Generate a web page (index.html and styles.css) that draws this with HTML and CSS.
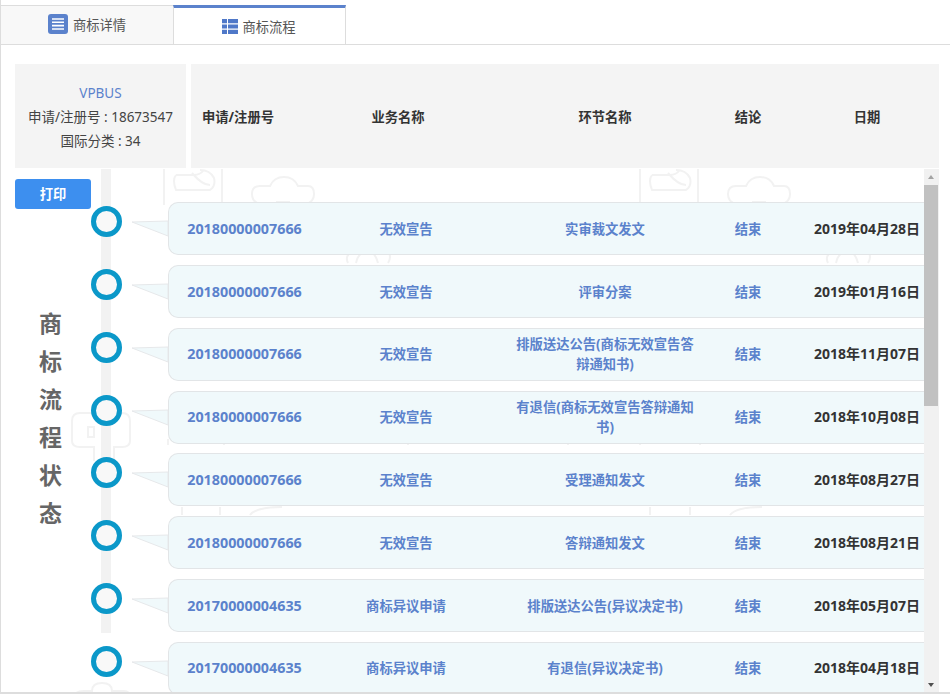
FILE: index.html
```html
<!DOCTYPE html>
<html lang="zh">
<head>
<meta charset="utf-8">
<title>商标流程</title>
<link rel="stylesheet" href="styles.css">
</head>
<body>
<div class="page">
  <nav class="tabs">
    <div class="tab">
      <svg class="icon-detail" viewBox="0 0 20 20"><rect width="20" height="20" rx="3" fill="#5b82cc"/><path d="M4 5h12M4 8.2h12M4 11.6h12M4 15h12" stroke="#fff" stroke-width="1.6" fill="none"/></svg>
      <span>商标详情</span>
    </div>
    <div class="tab tab-active">
      <svg class="icon-flow" viewBox="0 0 16 15"><path fill="#4f78c8" d="M0 0h5v4.2H0zM6 0h10v4.2H6zM0 5.4h5v4.2H0zM6 5.4h10v4.2H6zM0 10.8h5V15H0zM6 10.8h10V15H6z"/></svg>
      <span>商标流程</span>
    </div>
  </nav>
  <main class="content">
    <header class="head">
      <div class="summary">
        <div class="brand">VPBUS</div>
        <div>申请/注册号 : 18673547</div>
        <div>国际分类 : 34</div>
      </div>
      <div class="columns">
        <div>申请/注册号</div><div>业务名称</div><div>环节名称</div><div>结论</div><div>日期</div>
      </div>
    </header>
    <section class="scroll">
      <svg class="watermark" viewBox="0 0 924 524" width="924" height="524">
        <defs>
          <g id="wm-box"><path d="M0 0V40M58 0V40M12 10h18q6 0 10-5M12 10q-4 5 0 15h34q6-4 4-12q-4-8-14-8M28 8q10 12 18 12"/></g>
          <g id="wm-cross"><path d="M18 8q4-9 14-9t14 9h10q6 0 6 8t-8 10H8q-8-2-8-10t8-8zM10 26v8M52 26v8M24 24h14"/></g>
          <g id="wm-foot"><path d="M4 12q-4-8 6-12M12 12q2-10 10-12t12 12M44 12q4-6 0-12"/></g>
        </defs>
        <g class="wm-lines">
          <use href="#wm-box" x="164" y="-4"/><use href="#wm-cross" x="252" y="9"/>
          <use href="#wm-box" x="640" y="-4"/><use href="#wm-cross" x="728" y="9"/>
          <use href="#wm-foot" x="344" y="82"/><use href="#wm-foot" x="824" y="82"/>
          <path d="M72 252q0-8 8-8h14q2-6 8-6t8 6h12q8 0 8 8v20q0 6-8 6H114v14M72 252v20q0 6 8 6h14v14M88 258h6v10h-6z"/>
          <path d="M168 270v6M224 270v6M408 270v6M568 270v6M640 270v6M700 270v6M182 338v8M220 338v8M250 346q6-8 32-8M650 338v8M690 338v8M730 346q6-8 32-8"/>
          <path d="M72 530q2-8 12-8h8q0-8 10-8t10 8h12q6 0 8 8"/>
        </g>
      </svg>
      <div class="timeline">
        <aside class="side">
          <button class="print" type="button">打印</button>
          <div class="state"><span>商</span><span>标</span><span>流</span><span>程</span><span>状</span><span>态</span></div>
        </aside>
        <div class="rows">
          <article class="row"><i class="node"></i><svg class="tail" viewBox="0 0 37 18"><path d="M0 2L36 1V16z"/></svg><div class="bubble"><div class="id">20180000007666</div><div>无效宣告</div><div class="step">实审裁文发文</div><div>结束</div><div class="date">2019年04月28日</div></div></article>
          <article class="row"><i class="node"></i><svg class="tail" viewBox="0 0 37 18"><path d="M0 2L36 1V16z"/></svg><div class="bubble"><div class="id">20180000007666</div><div>无效宣告</div><div class="step">评审分案</div><div>结束</div><div class="date">2019年01月16日</div></div></article>
          <article class="row"><i class="node"></i><svg class="tail" viewBox="0 0 37 18"><path d="M0 2L36 1V16z"/></svg><div class="bubble"><div class="id">20180000007666</div><div>无效宣告</div><div class="step">排版送达公告(商标无效宣告答辩通知书)</div><div>结束</div><div class="date">2018年11月07日</div></div></article>
          <article class="row"><i class="node"></i><svg class="tail" viewBox="0 0 37 18"><path d="M0 2L36 1V16z"/></svg><div class="bubble"><div class="id">20180000007666</div><div>无效宣告</div><div class="step">有退信(商标无效宣告答辩通知书)</div><div>结束</div><div class="date">2018年10月08日</div></div></article>
          <article class="row"><i class="node"></i><svg class="tail" viewBox="0 0 37 18"><path d="M0 2L36 1V16z"/></svg><div class="bubble"><div class="id">20180000007666</div><div>无效宣告</div><div class="step">受理通知发文</div><div>结束</div><div class="date">2018年08月27日</div></div></article>
          <article class="row"><i class="node"></i><svg class="tail" viewBox="0 0 37 18"><path d="M0 2L36 1V16z"/></svg><div class="bubble"><div class="id">20180000007666</div><div>无效宣告</div><div class="step">答辩通知发文</div><div>结束</div><div class="date">2018年08月21日</div></div></article>
          <article class="row"><i class="node"></i><svg class="tail" viewBox="0 0 37 18"><path d="M0 2L36 1V16z"/></svg><div class="bubble"><div class="id">20170000004635</div><div>商标异议申请</div><div class="step">排版送达公告(异议决定书)</div><div>结束</div><div class="date">2018年05月07日</div></div></article>
          <article class="row"><i class="node"></i><svg class="tail" viewBox="0 0 37 18"><path d="M0 2L36 1V16z"/></svg><div class="bubble"><div class="id">20170000004635</div><div>商标异议申请</div><div class="step">有退信(异议决定书)</div><div>结束</div><div class="date">2018年04月18日</div></div></article>
        </div>
      </div>
      <div class="scrollbar">
        <span class="arrow-up"></span>
        <span class="thumb"></span>
        <span class="arrow-down"></span>
      </div>
    </section>
  </main>
</div>
</body>
</html>
```
FILE: styles.css
```css
* { box-sizing: border-box; }
html, body { margin: 0; height: 100%; overflow: hidden; background: #fff; }
body {
  font-family: "Noto Sans", "Noto Sans CJK SC", sans-serif;
  font-size: 14px;
  color: #444;
}
.page {
  height: 694px;
  padding-top: 5px;
  border-left: 1px solid #ddd;
  border-bottom: 2px solid #ddd;
  overflow: hidden;
}
.tabs {
  display: flex;
  height: 40px;
  border-bottom: 1px solid #ddd;
}
.tab {
  width: 172px;
  height: 39px;
  padding: 0 0 2px;
  display: flex;
  align-items: center;
  justify-content: center;
  gap: 5px;
  font-size: 13.3px;
  color: #555;
  background: #f8f8f8;
  border-top: 1px solid #ddd;
}
.tab-active {
  background: #fff;
  width: 173px;
  padding: 1px 1px 0 0;
  gap: 4px;
  border-top: 3px solid #5b82cc;
  border-left: 1px solid #ddd;
  border-right: 1px solid #ddd;
}
.icon-detail { width: 20px; height: 20px; }
.icon-flow { width: 16px; height: 15px; }
.content { padding: 19px 11px 0 14px; }
.head { display: flex; gap: 5px; height: 104px; }
.summary {
  width: 171px;
  padding-top: 2px;
  background: #f4f4f4;
  display: flex;
  flex-direction: column;
  justify-content: center;
  align-items: center;
  line-height: 24px;
  font-size: 13.5px;
  color: #444;
}
.brand { color: #5b82cc; }
.columns {
  flex: 1;
  background: #f4f4f4;
  display: grid;
  grid-template-columns: 94px 226px 188px 98px 140px;
  align-items: center;
  text-align: center;
  font-weight: 700;
  font-size: 13.3px;
  color: #333;
}
.scroll {
  position: relative;
  display: flex;
  height: 523px;
  margin-top: 1px;
  overflow: hidden;
}
.watermark { position: absolute; left: -15px; top: 0; }
.wm-lines { fill: none; stroke: #f2f2f2; stroke-width: 2; }
.timeline { position: relative; display: flex; width: 909px; }
.side { width: 76px; flex: none; padding-top: 10px; }
.print {
  display: block;
  width: 76px;
  height: 30px;
  padding: 0 0 2px;
  border: 0;
  border-radius: 3px;
  background: #3d8fef;
  color: #fff;
  font: 700 13.3px "Noto Sans", "Noto Sans CJK SC", sans-serif;
}
.state {
  margin-top: 95px;
  display: flex;
  flex-direction: column;
  width: 71px;
  align-items: center;
  font-size: 23px;
  line-height: 38px;
  font-weight: 700;
  color: #666;
}
.rows {
  flex: 1;
  padding-top: 33.3px;
  background: linear-gradient(#f2f2f2, #f2f2f2) 10px 0 / 10px 464px no-repeat;
}
.row {
  display: flex;
  align-items: flex-start;
  height: 53px;
  margin-bottom: 9.8px;
}
.node {
  flex: none;
  width: 31px;
  height: 31px;
  margin-top: 4px;
  border: 5px solid #0b98c9;
  border-radius: 50%;
  background: #f8f8f8;
}
.tail {
  flex: none;
  width: 37px;
  height: 18px;
  margin: 18px -1px 0 10px;
  position: relative;
  z-index: 1;
}
.tail path { fill: #f0f9fb; stroke: #e6e8ea; stroke-width: 1; }
.bubble {
  flex: 1;
  height: 53px;
  display: grid;
  grid-template-columns: 151px 172px 226px 60px 1fr;
  align-items: center;
  text-align: center;
  background: #f0f9fb;
  border: 1px solid #e2e5e7;
  border-right: 0;
  border-radius: 10px 0 0 10px;
  font-size: 13.3px;
  line-height: 20px;
  font-weight: 700;
  color: #5b82cc;
}
.id { font-size: 14.3px; }
.step { padding: 0 24px; }
.date { font-size: 14px; text-align: right; padding-right: 4px; color: #333; white-space: nowrap; }
.scrollbar {
  position: relative;
  flex: none;
  width: 15px;
  background: #f1f1f1;
}
.thumb {
  position: absolute;
  left: 0;
  right: 1px;
  top: 16px;
  height: 221px;
  background: #c1c1c1;
}
.arrow-up, .arrow-down {
  position: absolute;
  left: 4px;
  width: 0;
  height: 0;
  border-left: 3.5px solid transparent;
  border-right: 3.5px solid transparent;
}
.arrow-up { top: 6px; border-bottom: 4px solid #a3a3a3; }
.arrow-down { top: 514px; border-top: 4px solid #505050; }
```
